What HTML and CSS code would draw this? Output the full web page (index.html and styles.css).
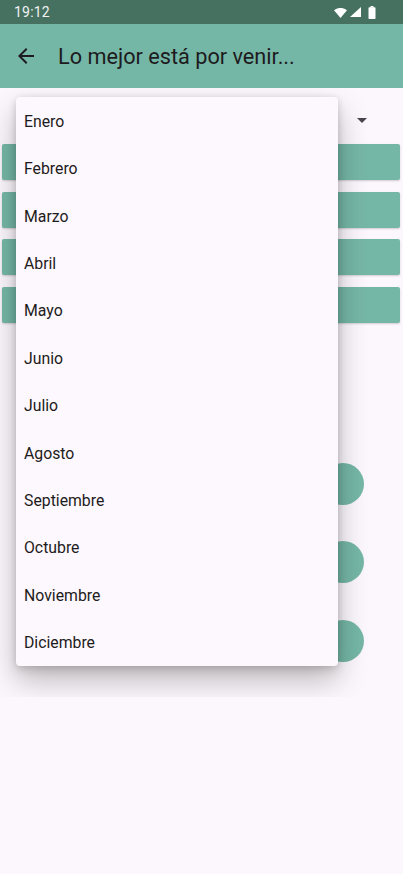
FILE: index.html
```html
<!DOCTYPE html>
<html lang="es">
<head>
<meta charset="utf-8">
<title>Lo mejor está por venir...</title>
<link rel="stylesheet" href="styles.css">
</head>
<body>
<div class="screen">
  <div class="status-bar">
    <span class="clock">19:12</span>
    <div class="status-icons">
      <svg class="ic-wifi" width="13" height="10" viewBox="0 0 13 10"><path d="M0 2.2 Q6.5 -2.4 13 2.2 L6.5 10 Z" fill="#fff"/></svg>
      <svg class="ic-signal" width="11" height="10" viewBox="0 0 11 10"><path d="M11 0 L11 10 L0 10 Z" fill="#fff"/></svg>
      <svg class="ic-battery" width="8" height="13" viewBox="0 0 8 13"><rect x="2.5" y="0" width="3" height="1.5" fill="#fff"/><rect x="0.5" y="1.2" width="7" height="11.8" rx="0.8" fill="#fff"/></svg>
    </div>
  </div>
  <header class="app-bar">
    <svg class="back" width="24" height="24" viewBox="0 0 24 24"><path d="M20 11H7.83l5.59-5.59L12 4l-8 8 8 8 1.41-1.41L7.83 13H20v-2z" fill="#1d1b20"/></svg>
    <h1 class="title">Lo mejor está por venir...</h1>
  </header>
  <main class="content">
    <div class="spinner">
      <span class="caret"></span>
    </div>
    <div class="bars">
      <div class="bar"></div>
      <div class="bar"></div>
      <div class="bar"></div>
      <div class="bar"></div>
    </div>
    <div class="rounds">
      <div class="round"></div>
      <div class="round"></div>
      <div class="round"></div>
    </div>
  </main>

  <div class="popup">
    <ul class="menu">
      <li>Enero</li>
      <li>Febrero</li>
      <li>Marzo</li>
      <li>Abril</li>
      <li>Mayo</li>
      <li>Junio</li>
      <li>Julio</li>
      <li>Agosto</li>
      <li>Septiembre</li>
      <li>Octubre</li>
      <li>Noviembre</li>
      <li>Diciembre</li>
    </ul>
  </div>
</div>
</body>
</html>
```

FILE: styles.css
```css
* { box-sizing: border-box; }
html, body {
  margin: 0;
  padding: 0;
  background: #fcf7fc;
  font-family: Roboto, "Noto Sans", "Liberation Sans", sans-serif;
  color: #1d1b20;
}
.screen {
  position: relative;
  width: 403px;
  height: 874px;
  overflow: hidden;
  background: #fcf7fc;
}
.status-bar {
  height: 24px;
  background: #467161;
  display: flex;
  align-items: center;
  justify-content: space-between;
  padding: 0 27px 0 14px;
}
.clock {
  color: #f2f2f2;
  font-size: 14px;
  letter-spacing: 0.2px;
}
.status-icons {
  display: flex;
  align-items: center;
  gap: 3px;
}
.ic-wifi { margin-top: 1px; }
.ic-battery { margin-left: 4px; }
.app-bar {
  height: 64px;
  background: #75b7a6;
  display: flex;
  align-items: center;
  padding-left: 14px;
}
.back { flex: none; }
.title {
  margin: 0 0 0 20px;
  font-size: 21.7px;
  font-weight: 400;
  color: #1d1b20;
  letter-spacing: 0;
}
.content {
  padding-top: 9px;
}
.spinner {
  height: 47px;
  display: flex;
  align-items: center;
  justify-content: flex-end;
  padding-right: 36px;
}
.caret {
  width: 0;
  height: 0;
  border-left: 5px solid transparent;
  border-right: 5px solid transparent;
  border-top: 5px solid #49454f;
}
.bars {
  display: flex;
  flex-direction: column;
  gap: 11.5px;
  padding: 0 3px 0 2px;
}
.bar {
  height: 36px;
  background: #75b7a6;
  border-radius: 2px;
  box-shadow: 0 1px 2px rgba(0,0,0,0.18);
}
.rounds {
  display: flex;
  flex-direction: column;
  align-items: flex-end;
  gap: 36.5px;
  padding: 140px 39px 0 0;
}
.round {
  width: 42px;
  height: 42px;
  border-radius: 50%;
  background: #75b7a6;
}
.popup {
  position: absolute;
  left: 0;
  top: 88px;
  width: 368px;
  height: 609px;
  overflow: hidden;
  padding: 9px 0 0 16px;
}
.menu {
  list-style: none;
  margin: 0;
  padding: 0;
  width: 322px;
  height: 569px;
  background: #fdf8fd;
  border-radius: 4px;
  box-shadow: 0 14px 30px rgba(0,0,0,0.26), 0 4px 10px rgba(0,0,0,0.12), 0 0 6px rgba(0,0,0,0.07);
  display: flex;
  flex-direction: column;
}
.menu li {
  height: 47.42px;
  display: flex;
  align-items: center;
  padding: 1px 0 0 8px;
  font-size: 15.8px;
  color: #1d1b20;
}
```
